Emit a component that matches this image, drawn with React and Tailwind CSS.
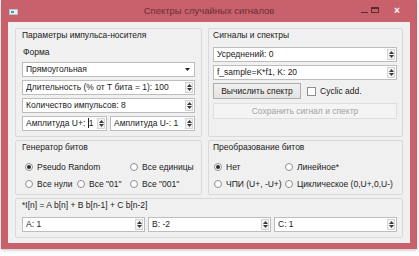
import React from "react";

function Arrows() {
  return (
    <div className="w-[8px] h-[11px] flex flex-col border border-[#d4d4d4] bg-[#f2f2f2] shrink-0">
      <div className="flex-1 flex items-center justify-center">
        <svg width="5" height="3" viewBox="0 0 5 3"><path d="M2.5 0L5 3H0z" fill="#3a3a3a" /></svg>
      </div>
      <div className="flex-1 flex items-center justify-center">
        <svg width="5" height="3" viewBox="0 0 5 3"><path d="M0 0H5L2.5 3z" fill="#3a3a3a" /></svg>
      </div>
    </div>
  );
}

function Spin({ children, className = "" }) {
  return (
    <div className={`h-[15px] bg-white border border-[#bdbdbd] flex items-center pl-[3px] pr-[1px] ${className}`}>
      <span className="flex-1 whitespace-nowrap overflow-hidden leading-[13px]">{children}</span>
      <Arrows />
    </div>
  );
}

function Radio({ checked, children, className = "" }) {
  return (
    <div className={`flex items-center h-[12px] whitespace-nowrap ${className}`}>
      <span className="w-[8px] h-[8px] rounded-full border border-[#8e8e8e] bg-white flex items-center justify-center mr-[4px] shrink-0">
        {checked && <span className="w-[4px] h-[4px] rounded-full bg-[#2b2b2b]" />}
      </span>
      <span className="leading-[12px]">{children}</span>
    </div>
  );
}

function Group({ title, className = "", children }) {
  return (
    <div className={`border border-[#d9d9d9] rounded-[2px] flex flex-col ${className}`}>
      <div className="h-[12px] leading-[12px] whitespace-nowrap">{title}</div>
      {children}
    </div>
  );
}

export default function App() {
  return (
    <div className="w-[419px] h-[256px] bg-white font-['Liberation_Sans',Arial,sans-serif] text-[8.5px] text-[#1a1a1a]">
      <div className="ml-px w-[416px] h-[249px] bg-[#c8616c] flex flex-col shadow-[0_1px_3px_rgba(0,0,0,0.25)]">
        {/* Title bar */}
        <div className="h-[22px] relative flex items-center justify-center">
          <div className="absolute left-[8px] top-[9px] w-[9px] h-[6px] bg-[#e9eef0] border border-[#b8c4c8] flex items-start">
            <span className="w-[3px] h-[2px] bg-[#3c9ea0] mt-[1px] ml-[1px]" />
          </div>
          <span className="text-[9.5px] text-[#6a2f35] leading-[12px]">Спектры случайных сигналов</span>
          <div className="absolute left-[360px] top-[12px] w-[7px] h-[1px] bg-[#5a2c31]" />
          <div className="absolute left-[370px] top-[7px] w-[8px] h-[6px] border border-[#5a2c31] border-t-2" />
          <div className="absolute left-[393px] top-[5px] text-[10px] leading-[12px] text-white font-bold">×</div>
        </div>
        {/* Client area */}
        <div className="mx-[7px] h-[221px] bg-[#f0f0f0] px-[7px] pt-[6px] flex flex-col gap-[3px]">
          <div className="flex gap-[6px]">
            <Group title="Параметры импульса-носителя" className="w-[187px] h-[109px] pl-[6px] pr-[6px]">
              <div className="mt-[5px] h-[12px] leading-[12px] pl-[1px]">Форма</div>
              <div className="mt-[4px] h-[15px] bg-white border border-[#bdbdbd] flex items-center pl-[3px] pr-[4px]">
                <span className="flex-1 leading-[13px]">Прямоугольная</span>
                <svg width="5" height="3" viewBox="0 0 5 3"><path d="M0 0H5L2.5 3z" fill="#222" /></svg>
              </div>
              <Spin className="mt-[3px]">Длительность (% от T бита = 1): 100</Spin>
              <Spin className="mt-[3px]">Количество импульсов: 8</Spin>
              <div className="mt-[3px] flex gap-[3px]">
                <Spin className="flex-1">
                  Амплитуда U+: <span className="border-l border-[#222] pl-[0px]">1</span>
                </Spin>
                <Spin className="flex-1">Амплитуда U-: 1</Spin>
              </div>
            </Group>
            <Group title="Сигналы и спектры" className="w-[195px] h-[109px] pl-[4px] pr-[5px]">
              <Spin className="mt-[6px]">Усреднений: 0</Spin>
              <Spin className="mt-[3px]">f_sample=K*f1, K: 20</Spin>
              <div className="mt-[3px] flex items-center">
                <div className="w-[88px] h-[16px] border border-[#adadad] bg-gradient-to-b from-[#f0f0f0] to-[#e3e3e3] flex items-center justify-center leading-[12px]">
                  Вычислить спектр
                </div>
                <span className="ml-[6px] w-[9px] h-[9px] border border-[#8e8e8e] bg-white" />
                <span className="ml-[4px] leading-[12px]">Cyclic add.</span>
              </div>
              <div className="mt-[4px] h-[16px] border border-[#dedede] bg-[#f4f4f4] flex items-center justify-center text-[#a3a3a3] leading-[12px]">
                Сохранить сигнал и спектр
              </div>
            </Group>
          </div>
          <div className="flex gap-[6px]">
            <Group title="Генератор битов" className="w-[187px] h-[55px] pl-[6px]">
              <div className="mt-[8px] flex pl-[3px]">
                <Radio checked className="w-[105px]">Pseudo Random</Radio>
                <Radio>Все единицы</Radio>
              </div>
              <div className="mt-[5px] flex pl-[3px]">
                <Radio className="w-[52px]">Все нули</Radio>
                <Radio className="w-[53px]">Все "01"</Radio>
                <Radio>Все "001"</Radio>
              </div>
            </Group>
            <Group title="Преобразование битов" className="w-[195px] h-[55px] pl-[4px]">
              <div className="mt-[8px] flex pl-[1px]">
                <Radio checked className="w-[71px]">Нет</Radio>
                <Radio>Линейное*</Radio>
              </div>
              <div className="mt-[5px] flex pl-[1px]">
                <Radio className="w-[71px]">ЧПИ (U+, -U+)</Radio>
                <Radio>Циклическое (0,U+,0,U-)</Radio>
              </div>
            </Group>
          </div>
          <Group title="*I[n] = A b[n] + B b[n-1] + C b[n-2]" className="h-[40px] pl-[6px] pr-[5px]">
            <div className="mt-[6px] grid grid-cols-3 gap-[3px]">
              <Spin>A: 1</Spin>
              <Spin>B: -2</Spin>
              <Spin>C: 1</Spin>
            </div>
          </Group>
        </div>
      </div>
    </div>
  );
}
